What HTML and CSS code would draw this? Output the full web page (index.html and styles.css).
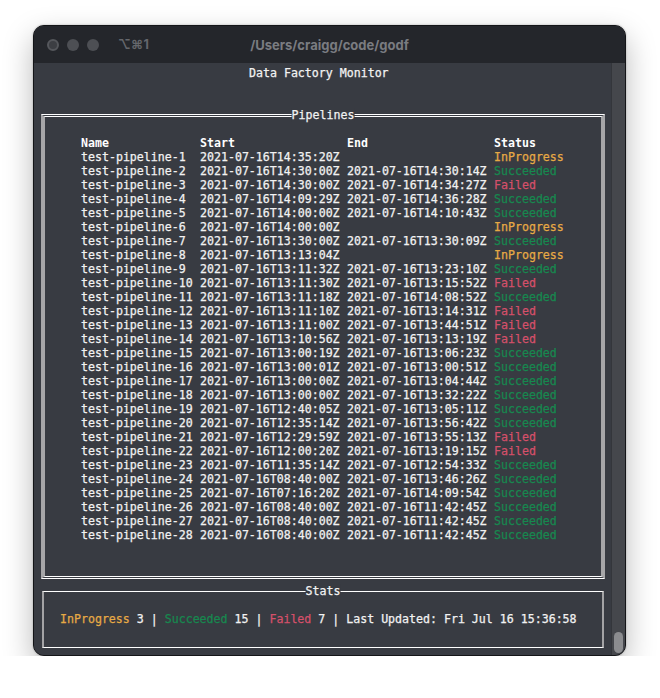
FILE: index.html
```html
<!DOCTYPE html>
<html>
<head>
<meta charset="utf-8">
<link rel="stylesheet" href="styles.css">
</head>
<body>
<div class="window">
  <div class="titlebar">
    <div class="tb-left">
      <span class="light light-close"></span>
      <span class="light"></span>
      <span class="light"></span>
      <span class="shortcut">⌥⌘1</span>
    </div>
    <div class="tb-title">/Users/craigg/code/godf</div>
    <div></div>
  </div>
  <div class="main">
    <div class="term">
      <div class="app-title">Data Factory Monitor</div>
      <section class="box pipelines">
        <div class="legend">Pipelines</div>
        <div class="row head"><span>Name</span><span>Start</span><span>End</span><span>Status</span></div>
        <div class="row"><span>test-pipeline-1</span><span>2021-07-16T14:35:20Z</span><span></span><span class="ip">InProgress</span></div>
        <div class="row"><span>test-pipeline-2</span><span>2021-07-16T14:30:00Z</span><span>2021-07-16T14:30:14Z</span><span class="ok">Succeeded</span></div>
        <div class="row"><span>test-pipeline-3</span><span>2021-07-16T14:30:00Z</span><span>2021-07-16T14:34:27Z</span><span class="fail">Failed</span></div>
        <div class="row"><span>test-pipeline-4</span><span>2021-07-16T14:09:29Z</span><span>2021-07-16T14:36:28Z</span><span class="ok">Succeeded</span></div>
        <div class="row"><span>test-pipeline-5</span><span>2021-07-16T14:00:00Z</span><span>2021-07-16T14:10:43Z</span><span class="ok">Succeeded</span></div>
        <div class="row"><span>test-pipeline-6</span><span>2021-07-16T14:00:00Z</span><span></span><span class="ip">InProgress</span></div>
        <div class="row"><span>test-pipeline-7</span><span>2021-07-16T13:30:00Z</span><span>2021-07-16T13:30:09Z</span><span class="ok">Succeeded</span></div>
        <div class="row"><span>test-pipeline-8</span><span>2021-07-16T13:13:04Z</span><span></span><span class="ip">InProgress</span></div>
        <div class="row"><span>test-pipeline-9</span><span>2021-07-16T13:11:32Z</span><span>2021-07-16T13:23:10Z</span><span class="ok">Succeeded</span></div>
        <div class="row"><span>test-pipeline-10</span><span>2021-07-16T13:11:30Z</span><span>2021-07-16T13:15:52Z</span><span class="fail">Failed</span></div>
        <div class="row"><span>test-pipeline-11</span><span>2021-07-16T13:11:18Z</span><span>2021-07-16T14:08:52Z</span><span class="ok">Succeeded</span></div>
        <div class="row"><span>test-pipeline-12</span><span>2021-07-16T13:11:10Z</span><span>2021-07-16T13:14:31Z</span><span class="fail">Failed</span></div>
        <div class="row"><span>test-pipeline-13</span><span>2021-07-16T13:11:00Z</span><span>2021-07-16T13:44:51Z</span><span class="fail">Failed</span></div>
        <div class="row"><span>test-pipeline-14</span><span>2021-07-16T13:10:56Z</span><span>2021-07-16T13:13:19Z</span><span class="fail">Failed</span></div>
        <div class="row"><span>test-pipeline-15</span><span>2021-07-16T13:00:19Z</span><span>2021-07-16T13:06:23Z</span><span class="ok">Succeeded</span></div>
        <div class="row"><span>test-pipeline-16</span><span>2021-07-16T13:00:01Z</span><span>2021-07-16T13:00:51Z</span><span class="ok">Succeeded</span></div>
        <div class="row"><span>test-pipeline-17</span><span>2021-07-16T13:00:00Z</span><span>2021-07-16T13:04:44Z</span><span class="ok">Succeeded</span></div>
        <div class="row"><span>test-pipeline-18</span><span>2021-07-16T13:00:00Z</span><span>2021-07-16T13:32:22Z</span><span class="ok">Succeeded</span></div>
        <div class="row"><span>test-pipeline-19</span><span>2021-07-16T12:40:05Z</span><span>2021-07-16T13:05:11Z</span><span class="ok">Succeeded</span></div>
        <div class="row"><span>test-pipeline-20</span><span>2021-07-16T12:35:14Z</span><span>2021-07-16T13:56:42Z</span><span class="ok">Succeeded</span></div>
        <div class="row"><span>test-pipeline-21</span><span>2021-07-16T12:29:59Z</span><span>2021-07-16T13:55:13Z</span><span class="fail">Failed</span></div>
        <div class="row"><span>test-pipeline-22</span><span>2021-07-16T12:00:20Z</span><span>2021-07-16T13:19:15Z</span><span class="fail">Failed</span></div>
        <div class="row"><span>test-pipeline-23</span><span>2021-07-16T11:35:14Z</span><span>2021-07-16T12:54:33Z</span><span class="ok">Succeeded</span></div>
        <div class="row"><span>test-pipeline-24</span><span>2021-07-16T08:40:00Z</span><span>2021-07-16T13:46:26Z</span><span class="ok">Succeeded</span></div>
        <div class="row"><span>test-pipeline-25</span><span>2021-07-16T07:16:20Z</span><span>2021-07-16T14:09:54Z</span><span class="ok">Succeeded</span></div>
        <div class="row"><span>test-pipeline-26</span><span>2021-07-16T08:40:00Z</span><span>2021-07-16T11:42:45Z</span><span class="ok">Succeeded</span></div>
        <div class="row"><span>test-pipeline-27</span><span>2021-07-16T08:40:00Z</span><span>2021-07-16T11:42:45Z</span><span class="ok">Succeeded</span></div>
        <div class="row"><span>test-pipeline-28</span><span>2021-07-16T08:40:00Z</span><span>2021-07-16T11:42:45Z</span><span class="ok">Succeeded</span></div>
      </section>
      <section class="box stats">
        <div class="legend">Stats</div>
        <div class="stats-line"><span class="ip">InProgress</span> 3 | <span class="ok">Succeeded</span> 15 | <span class="fail">Failed</span> 7 | Last Updated: Fri Jul 16 15:36:58</div>
      </section>
    </div>
    <div class="scrollbar"><div class="thumb"></div></div>
  </div>
</div>
</body>
</html>
```

FILE: styles.css
```css
html, body {
  margin: 0;
  background: #ffffff;
}
body {
  padding: 25px 0 0 33px;
}
.window {
  width: 593px;
  height: 631px;
  box-sizing: border-box;
  border: 1px solid #141518;
  border-radius: 11px;
  overflow: hidden;
  display: flex;
  flex-direction: column;
  box-shadow: 0 12px 30px rgba(0, 0, 0, 0.28), 0 0 2px rgba(0, 0, 0, 0.3);
  background: #383b42;
}
.titlebar {
  height: 37px;
  flex: none;
  background: #24262b;
  display: grid;
  grid-template-columns: 1fr auto 1fr;
  align-items: center;
  font-family: "Inter", "Liberation Sans", sans-serif;
  font-weight: 700;
}
.tb-left {
  display: flex;
  align-items: center;
  padding-left: 13px;
  gap: 8px;
}
.light {
  width: 12px;
  height: 12px;
  border-radius: 50%;
  background: #4d4f54;
  box-sizing: border-box;
}
.light-close {
  background: #3c3e43;
  border: 2px solid #55575c;
}
.shortcut {
  margin-left: 11px;
  font-size: 12.5px;
  color: #65676c;
  letter-spacing: 0.3px;
}
.tb-title {
  font-size: 13px;
  color: #7a7c81;
}
.main {
  flex: 1;
  display: flex;
  min-height: 0;
}
.term {
  flex: 1;
  padding: 3px 0 0 5px;
  background: #383b42;
  font-family: "DejaVu Sans Mono", "Liberation Mono", monospace;
  font-size: 11.6px;
  line-height: 14px;
  color: #f2f2f2;
  -webkit-text-stroke: 0.25px #f2f2f2;
}
.app-title {
  height: 14px;
  padding-left: 210px;
  white-space: pre;
}
.box {
  position: relative;
  box-sizing: border-box;
}
.pipelines {
  margin: 34px 0 0 2px;
  width: 564px;
  height: 465px;
  border-top: 3px double #ffffff;
  border-bottom: 3px double #ffffff;
  border-left: 4px solid #a6a6a8;
  border-right: 4px solid #a6a6a8;
  padding: 19px 0 0 36px;
}
.pipelines .legend {
  top: -9px;
}
.legend {
  position: absolute;
  left: 50%;
  transform: translateX(-50%);
  height: 14px;
  background: #383b42;
  white-space: pre;
}
.row {
  display: grid;
  grid-template-columns: 119px 147px 147px auto;
  height: 14px;
  white-space: pre;
}
.row.head {
  font-weight: 700;
  color: #ffffff;
  -webkit-text-stroke: 0;
}
.ip { color: #e6aa45; -webkit-text-stroke-color: #e6aa45; }
.ok { color: #17884f; -webkit-text-stroke-color: #17884f; }
.fail { color: #d5506a; -webkit-text-stroke-color: #d5506a; }
.stats {
  margin: 12px 0 0 3px;
  width: 562px;
  height: 57px;
  border-top: 1px solid #ffffff;
  border-bottom: 1px solid #ffffff;
  border-left: 2px solid #a3a3a5;
  border-right: 2px solid #a3a3a5;
  padding: 20px 0 0 16px;
}
.stats .legend {
  top: -8px;
}
.stats-line {
  height: 14px;
  white-space: pre;
}
.scrollbar {
  width: 14px;
  flex: none;
  box-sizing: border-box;
  background: #45474c;
  border-left: 1px solid #34363b;
  display: flex;
  flex-direction: column;
  justify-content: flex-end;
  padding: 0 0 2px 2px;
}
.thumb {
  width: 9px;
  height: 21px;
  border-radius: 5px;
  background: #8b8c8f;
}
```
